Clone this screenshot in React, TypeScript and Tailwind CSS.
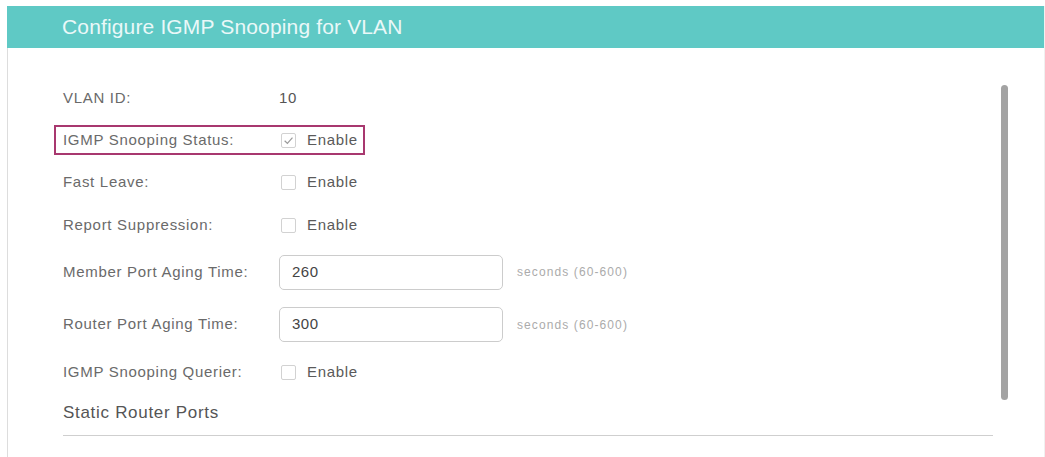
import React from "react";

function Checkbox({ checked }: { checked?: boolean }) {
  return (
    <span className="inline-flex h-[15px] w-[15px] items-center justify-center rounded-[2px] border border-[#d2d2d2] bg-white">
      {checked && (
        <svg width="11" height="11" viewBox="0 0 10 10">
          <path d="M1.5 5.2 L4 7.6 L8.6 2.4" fill="none" stroke="#9a9a9a" strokeWidth="1.1" />
        </svg>
      )}
    </span>
  );
}

function EnableValue({ checked }: { checked?: boolean }) {
  return (
    <div className="flex items-center pl-[2px]">
      <Checkbox checked={checked} />
      <span className="ml-[11px] text-[15px] tracking-[0.7px] text-[#5a5a5a]">Enable</span>
    </div>
  );
}

function Row({ label, h, children }: { label: string; h: string; children: React.ReactNode }) {
  return (
    <div className={`flex items-center ${h}`}>
      <div className="w-[216px] text-[15px] tracking-[0.7px] text-[#6a6a6a]">{label}</div>
      {children}
    </div>
  );
}

function InputRow({ label, value, h }: { label: string; value: string; h: string }) {
  return (
    <Row label={label} h={h}>
      <div className="flex h-[35px] w-[224px] items-center rounded-[5px] border border-[#cccccc] pl-[12px] text-[15px] tracking-[0.5px] text-[#444]">
        {value}
      </div>
      <span className="ml-[14px] text-[12px] tracking-[1.1px] text-[#ababab]">seconds (60-600)</span>
    </Row>
  );
}

export default function App() {
  return (
    <div
      className="relative h-[457px] w-[1045px] overflow-hidden bg-white pl-[7px] pt-[6px]"
      style={{ fontFamily: '"Liberation Sans", Arial, sans-serif' }}
    >
      <div className="h-[451px] border-r border-[#f0f0f0]">
        <div className="flex h-[42px] items-center bg-[#5fc9c5] pl-[55px] text-[21px] tracking-[0.15px] text-[#eaf8f8]">
          Configure IGMP Snooping for VLAN
        </div>
        <div className="h-full border-l border-[#dddddd] pl-[55px] pt-[29px]">
          <Row label="VLAN ID:" h="h-[42px]">
            <span className="text-[15px] tracking-[0.7px] text-[#555]">10</span>
          </Row>
          <div className="flex h-[42px] items-center">
            <div className="-ml-[9px] flex h-[30px] w-[311px] items-center border-2 border-[#a8386f] pl-[7px]">
              <div className="w-[216px] text-[15px] tracking-[0.7px] text-[#6a6a6a]">IGMP Snooping Status:</div>
              <EnableValue checked />
            </div>
          </div>
          <Row label="Fast Leave:" h="h-[43px]">
            <EnableValue />
          </Row>
          <Row label="Report Suppression:" h="h-[42px]">
            <EnableValue />
          </Row>
          <InputRow label="Member Port Aging Time:" value="260" h="h-[52px]" />
          <InputRow label="Router Port Aging Time:" value="300" h="h-[53px]" />
          <Row label="IGMP Snooping Querier:" h="h-[42px]">
            <EnableValue />
          </Row>
          <div className="flex h-[43px] w-[930px] items-center border-b border-[#cfcfcf] pb-[2px] text-[17px] tracking-[0.7px] text-[#555]">
            Static Router Ports
          </div>
        </div>
      </div>
      <div className="absolute left-[1001px] top-[85px] h-[315px] w-[7px] rounded-full bg-[#a3a3a3]" />
    </div>
  );
}
